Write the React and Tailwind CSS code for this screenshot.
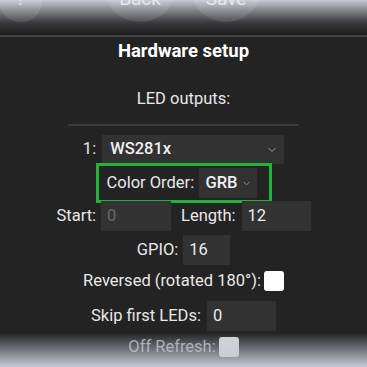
import { ChevronDown } from "lucide-react";

const font = { fontFamily: "Roboto, 'Noto Sans', sans-serif" };

function Field({ value, width, dim }) {
  return (
    <div
      className={`h-[30px] bg-[#323232] px-[6px] flex items-center text-[16.5px] ${dim ? "text-[#6a6a6a]" : "text-[#ececec]"}`}
      style={{ width }}
    >
      {value}
    </div>
  );
}

function Box({ className = "" }) {
  return <div className={`w-[20px] h-[20px] rounded-[3px] ${className}`} />;
}

export default function App() {
  return (
    <div className="relative w-[367px] h-[367px] overflow-hidden bg-[#232323] text-[#e8e8e8]" style={font}>
      {/* top bar */}
      <div className="h-[37px] bg-linear-to-b from-[#c6cad5] via-[#3a3a3d] via-65% to-[#1e1e1e] border-b-2 border-[#464646] flex items-start overflow-hidden">
        <div className="ml-[-1px] mt-[-20px] w-[43px] h-[42px] rounded-full bg-white/10 flex items-end justify-center pb-[9px] text-[19px] text-[#eceef3]/90">
          ?
        </div>
        <div className="ml-[61px] mt-[-52px] w-[74px] h-[74px] rounded-full bg-white/10 flex items-end justify-center pb-[9px] text-[19px] text-[#eceef3]/90">
          Back
        </div>
        <div className="ml-[13px] mt-[-52px] w-[72px] h-[74px] rounded-full bg-white/10 flex items-end justify-center pb-[9px] text-[19px] text-[#eceef3]/90">
          Save
        </div>
      </div>

      <div className="flex flex-col items-center">
        <div className="mt-[2px] h-[24px] leading-[24px] text-[18.5px] font-bold text-white">Hardware setup</div>
        <div className="mt-[25px] h-[22px] leading-[22px] text-[16.5px]">LED outputs:</div>
        <div className="mt-[14px] h-[2px] w-[231px] bg-[#3a3a3a]" />

        {/* type select */}
        <div className="mt-[9px] flex items-center gap-[6px] h-[29px] text-[16.5px]">
          <span>1:</span>
          <div className="w-[182px] h-[29px] bg-[#323232] pl-[8px] pr-[6px] flex items-center justify-between">
            <span className="font-medium text-[#f0f0f0]">WS281x</span>
            <ChevronDown size={12} strokeWidth={2} className="text-[#9a9a9a]" />
          </div>
        </div>

        {/* color order, highlighted */}
        <div className="mt-[-1px] w-[176px] border-[3px] border-[#20b23d] py-[2px] pl-[8px] pr-[12px] flex items-center justify-between text-[16.5px]">
          <span>Color Order:</span>
          <div className="w-[58px] h-[30px] bg-[#323232] pl-[7px] flex items-center gap-[3px]">
            <span className="font-medium text-[#f0f0f0]">GRB</span>
            <ChevronDown size={11} strokeWidth={2} className="text-[#9a9a9a]" />
          </div>
        </div>

        <div className="mt-[-2px] flex items-center text-[16.5px]">
          <span className="mr-[5px]">Start:</span>
          <Field value="0" width={70} dim />
          <span className="ml-[10px] mr-[6px]">Length:</span>
          <Field value="12" width={69} />
        </div>

        <div className="mt-[4px] flex items-center gap-[5px] text-[16.5px]">
          <span>GPIO:</span>
          <Field value="16" width={47} />
        </div>

        <div className="mt-[5px] h-[22px] flex items-center gap-[3px] text-[16.5px]">
          <span>Reversed (rotated 180°):</span>
          <Box className="bg-white" />
        </div>

        <div className="mt-[9px] flex items-center gap-[6px] text-[16.5px]">
          <span>Skip first LEDs:</span>
          <Field value="0" width={69} />
        </div>

        <div className="mt-[6px] h-[20px] flex items-center gap-[3px] text-[16.5px] text-[#a4a4a4]">
          <span>Off Refresh:</span>
          <Box className="bg-[#d4d4d4]" />
        </div>
      </div>

      {/* bottom fade */}
      <div className="pointer-events-none absolute left-0 right-0 bottom-0 h-[34px] bg-linear-to-b from-transparent to-[#c6cad7]" />
    </div>
  );
}
